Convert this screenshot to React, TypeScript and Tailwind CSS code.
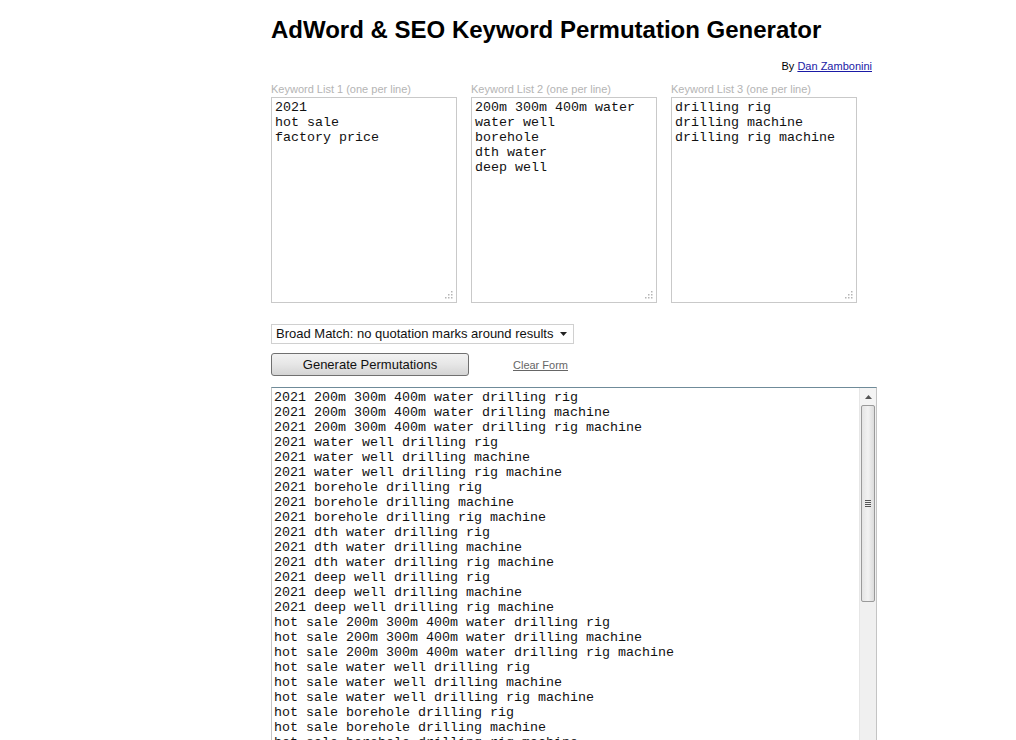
const list1 = ["2021", "hot sale", "factory price"];
const list2 = ["200m 300m 400m water", "water well", "borehole", "dth water", "deep well"];
const list3 = ["drilling rig", "drilling machine", "drilling rig machine"];

const results: string[] = [];
list1.forEach((a) => list2.forEach((b) => list3.forEach((c) => results.push(`${a} ${b} ${c}`))));

const Grip = () => (
  <svg className="absolute right-[3px] bottom-[3px]" width="9" height="9" viewBox="0 0 9 9">
    {[
      [7, 1],
      [7, 4],
      [4, 4],
      [7, 7],
      [4, 7],
      [1, 7],
    ].map(([x, y], i) => (
      <rect key={i} x={x} y={y} width="1.5" height="1.5" fill="#b5b5b5" />
    ))}
  </svg>
);

const KeywordBox = ({ label, items }: { label: string; items: string[] }) => (
  <div className="flex flex-col w-[186px]">
    <p className="text-[#b4b4b4] text-[11px] leading-[13px] h-[13px] mb-[1px] font-['Liberation_Sans',Arial,sans-serif]">
      {label}
    </p>
    <div className="relative h-[206px] border border-[#c9c9c9] bg-white pt-[2px] pl-[3px] whitespace-pre text-[13.33px] leading-[15px] text-[#111] font-['Liberation_Mono','Courier_New',monospace]">
      {items.join("\n")}
      <Grip />
    </div>
  </div>
);

export default function App() {
  return (
    <div className="min-h-[740px] h-[740px] overflow-hidden bg-white pl-[271px] pt-[16px] font-['Liberation_Sans',Arial,sans-serif]">
      <div className="w-[606px]">
        <h1 className="text-[24px] leading-[28px] font-bold text-black">
          AdWord &amp; SEO Keyword Permutation Generator
        </h1>
        <p className="mt-[16px] pr-[5px] text-right text-[11px] leading-[13px] text-black">
          By <a href="#" className="text-[#1a1aa6] underline">Dan Zambonini</a>
        </p>
        <div className="mt-[10px] flex gap-[14px]">
          <KeywordBox label="Keyword List 1 (one per line)" items={list1} />
          <KeywordBox label="Keyword List 2 (one per line)" items={list2} />
          <KeywordBox label="Keyword List 3 (one per line)" items={list3} />
        </div>
        <div className="mt-[21px] flex items-center w-[303px] h-[20px] border border-[#d0d0d0] bg-white pl-[4px] pr-[6px] text-[13px] text-[#111] whitespace-nowrap">
          <span className="flex-1">Broad Match: no quotation marks around results</span>
          <svg width="7" height="4" viewBox="0 0 7 4">
            <path d="M0 0h7L3.5 4z" fill="#222" />
          </svg>
        </div>
        <div className="mt-[9px] flex items-center">
          <button className="w-[198px] h-[23px] rounded-[3px] border border-[#707070] bg-gradient-to-b from-[#f2f2f2] via-[#e6e6e6] to-[#d4d4d4] text-[13px] text-[#111]">
            Generate Permutations
          </button>
          <a href="#" className="ml-[44px] mt-[2px] text-[11px] text-[#666] underline">
            Clear Form
          </a>
        </div>
        <div className="mt-[11px] flex h-[400px] border border-[#c4c4c4] border-t-[#6f8b99] bg-white">
          <div className="flex-1 overflow-hidden pt-[2px] pl-[2px] whitespace-pre text-[13.33px] leading-[15px] text-[#111] font-['Liberation_Mono','Courier_New',monospace]">
            {results.join("\n")}
          </div>
          <div className="w-[17px] flex flex-col bg-[#f0f0f0] border-l border-[#e6e6e6]">
            <div className="h-[17px] flex items-center justify-center bg-[#f4f4f4]">
              <svg width="7" height="4" viewBox="0 0 7 4">
                <path d="M3.5 0L7 4H0z" fill="#555" />
              </svg>
            </div>
            <div className="mx-[1px] h-[197px] rounded-[2px] border border-[#9a9a9a] bg-gradient-to-r from-[#e4e4e4] via-[#f2f2f2] to-[#dcdcdc] flex flex-col items-center justify-center gap-[1px]">
              <div className="w-[6px] h-[1px] bg-[#555]" />
              <div className="w-[6px] h-[1px] bg-[#555]" />
              <div className="w-[6px] h-[1px] bg-[#555]" />
              <div className="w-[6px] h-[1px] bg-[#555]" />
            </div>
          </div>
        </div>
      </div>
    </div>
  );
}
